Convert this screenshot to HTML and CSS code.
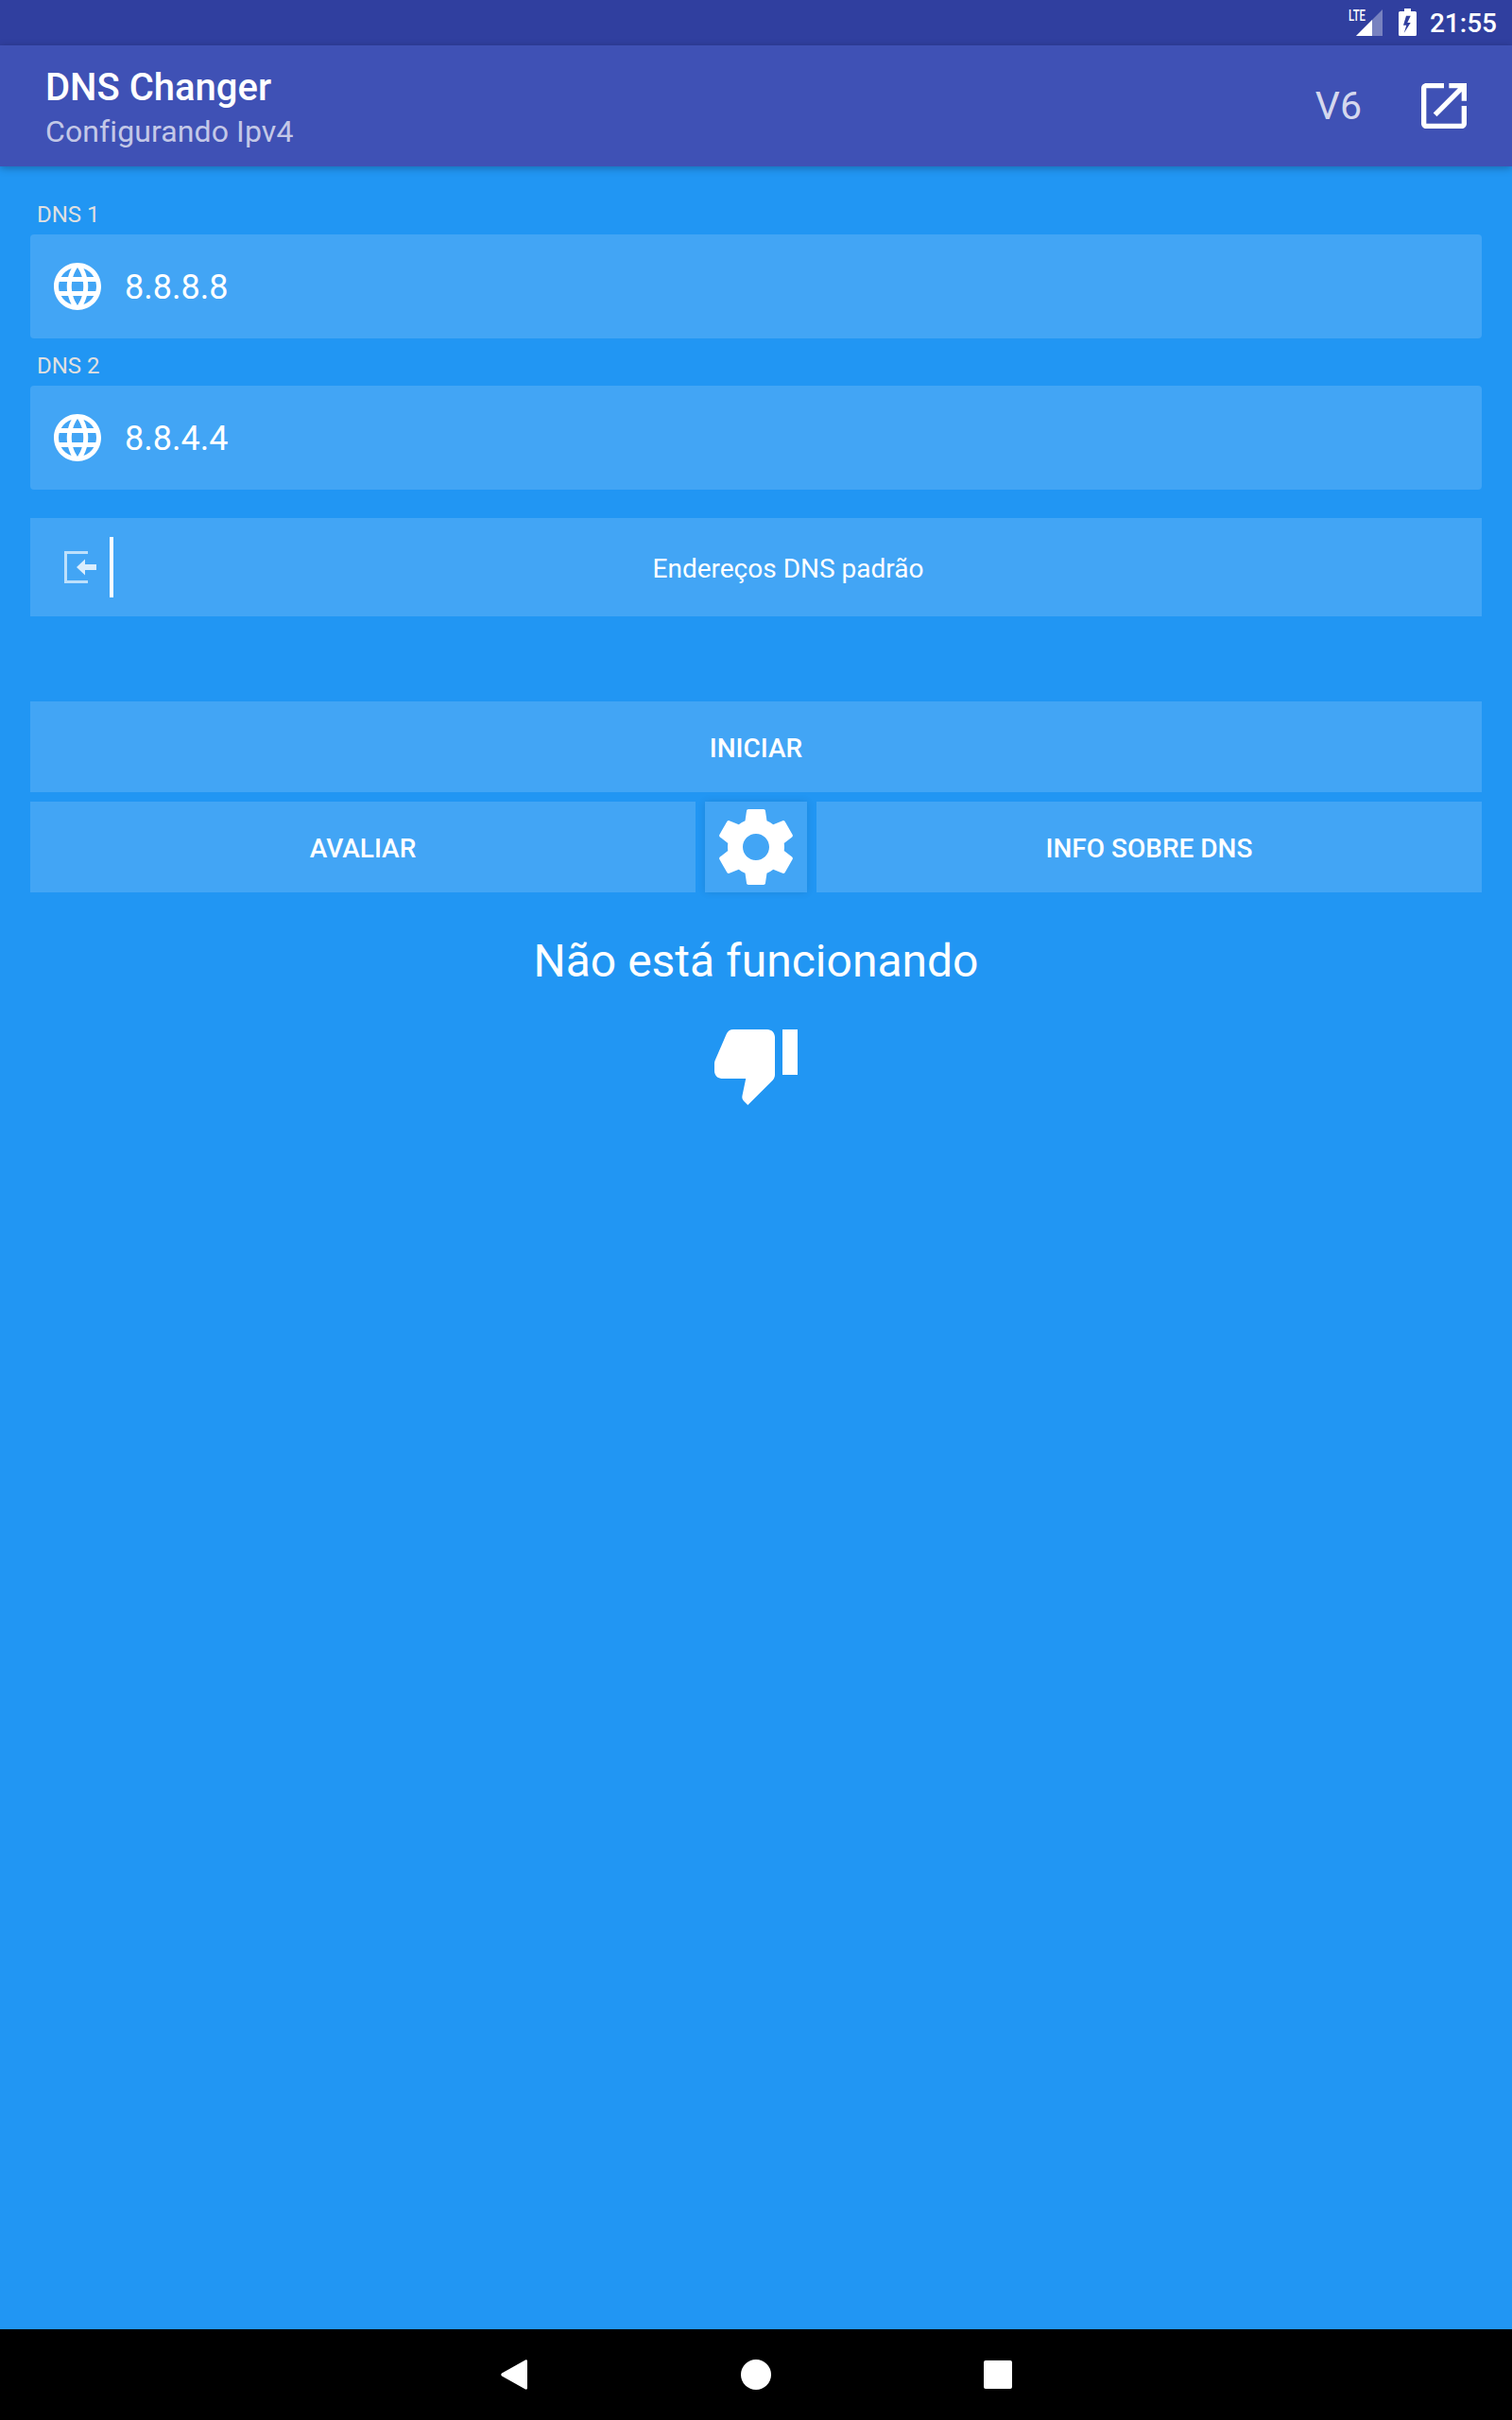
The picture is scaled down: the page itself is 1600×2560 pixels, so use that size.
FILE: index.html
```html
<!DOCTYPE html>
<html lang="pt">
<head>
<meta charset="utf-8">
<title>DNS Changer</title>
<link rel="stylesheet" href="styles.css">
</head>
<body>
<div class="screen">
  <div class="statusbar">
    <svg class="ic-signal" viewBox="0 -6 36 34" width="36" height="34">
      <path class="faint" d="M8 28 36 0v28z"/>
      <path d="M8 28 25 11v17z"/>
      <text class="lte" x="0" y="12" textLength="18" lengthAdjust="spacingAndGlyphs">LTE</text>
    </svg>
    <svg class="ic-battery" viewBox="0 0 19 29" width="19" height="29"><path fill-rule="evenodd" d="M6 0h7v3h4.500a1.500 1.500 0 0 1 1.500 1.500V27.500a1.500 1.500 0 0 1-1.500 1.500H1.500A1.500 1.500 0 0 1 0 27.500V4.500A1.500 1.500 0 0 1 1.500 3H6zM8 7.700 5 17.700h3.300L5.700 26l7-11H9.300l3.400-7.300z"/></svg>
    <span class="clock">21:55</span>
  </div>
  <header class="appbar">
    <div class="titles">
      <div class="title">DNS Changer</div>
      <div class="subtitle">Configurando Ipv4</div>
    </div>
    <span class="v6">V6</span>
    <svg class="ic-open" viewBox="0 0 24 24" width="64" height="64"><path d="M19 19H5V5h7V3H5c-1.11 0-2 .9-2 2v14c0 1.1.89 2 2 2h14c1.1 0 2-.9 2-2v-7h-2v7zM14 3v2h3.59l-9.83 9.83 1.41 1.41L19 6.41V10h2V3h-7z"/></svg>
  </header>
  <main class="content">
    <label class="field-label first">DNS 1</label>
    <div class="field">
      <svg class="ic-globe" viewBox="0 0 24 24" width="60" height="60"><path d="M11.99 2C6.47 2 2 6.48 2 12s4.47 10 9.99 10C17.52 22 22 17.52 22 12S17.52 2 11.99 2zm6.93 6h-2.95c-.32-1.25-.78-2.45-1.38-3.56 1.84.63 3.37 1.91 4.33 3.56zM12 4.04c.83 1.2 1.48 2.53 1.91 3.96h-3.82c.43-1.43 1.08-2.76 1.91-3.96zM4.26 14C4.1 13.36 4 12.69 4 12s.1-1.36.26-2h3.38c-.08.66-.14 1.32-.14 2 0 .68.06 1.34.14 2H4.26zm.82 2h2.95c.32 1.25.78 2.45 1.38 3.56-1.84-.63-3.37-1.9-4.33-3.56zm2.95-8H5.08c.96-1.66 2.49-2.93 4.33-3.56C8.81 5.55 8.35 6.75 8.03 8zM12 19.96c-.83-1.2-1.48-2.53-1.91-3.96h3.82c-.43 1.43-1.08 2.76-1.91 3.96zM14.34 14H9.66c-.09-.66-.16-1.32-.16-2 0-.68.07-1.35.16-2h4.68c.09.65.16 1.32.16 2 0 .68-.07 1.34-.16 2zm.25 5.56c.6-1.11 1.06-2.31 1.38-3.56h2.95c-.96 1.65-2.49 2.93-4.33 3.56zM16.36 14c.08-.66.14-1.32.14-2 0-.68-.06-1.34-.14-2h3.38c.16.64.26 1.31.26 2s-.1 1.36-.26 2h-3.38z"/></svg>
      <span class="field-value">8.8.8.8</span>
    </div>
    <label class="field-label">DNS 2</label>
    <div class="field">
      <svg class="ic-globe" viewBox="0 0 24 24" width="60" height="60"><path d="M11.99 2C6.47 2 2 6.48 2 12s4.47 10 9.99 10C17.52 22 22 17.52 22 12S17.52 2 11.99 2zm6.93 6h-2.95c-.32-1.25-.78-2.45-1.38-3.56 1.84.63 3.37 1.91 4.33 3.56zM12 4.04c.83 1.2 1.48 2.53 1.91 3.96h-3.82c.43-1.43 1.08-2.76 1.91-3.96zM4.26 14C4.1 13.36 4 12.69 4 12s.1-1.36.26-2h3.38c-.08.66-.14 1.32-.14 2 0 .68.06 1.34.14 2H4.26zm.82 2h2.95c.32 1.25.78 2.45 1.38 3.56-1.84-.63-3.37-1.9-4.33-3.56zm2.95-8H5.08c.96-1.66 2.49-2.93 4.33-3.56C8.81 5.55 8.35 6.75 8.03 8zM12 19.96c-.83-1.2-1.48-2.53-1.91-3.96h3.82c-.43 1.43-1.08 2.76-1.91 3.96zM14.34 14H9.66c-.09-.66-.16-1.32-.16-2 0-.68.07-1.35.16-2h4.68c.09.65.16 1.32.16 2 0 .68-.07 1.34-.16 2zm.25 5.56c.6-1.11 1.06-2.31 1.38-3.56h2.95c-.96 1.65-2.49 2.93-4.33 3.56zM16.36 14c.08-.66.14-1.32.14-2 0-.68-.06-1.34-.14-2h3.38c.16.64.26 1.31.26 2s-.1 1.36-.26 2h-3.38z"/></svg>
      <span class="field-value">8.8.4.4</span>
    </div>
    <div class="defaults">
      <svg class="ic-exit" viewBox="0 0 36 34" width="36" height="34">
        <path class="box" d="M25 1.500H1.500v31H25"/>
        <path class="arrow" d="M13 17l9-8.500V14h12v6H22v5.500z"/>
      </svg>
      <span class="divider"></span>
      <span class="defaults-text">Endereços DNS padrão</span>
    </div>
    <button class="btn start">INICIAR</button>
    <div class="btn-row">
      <button class="btn grow">AVALIAR</button>
      <button class="btn gear">
        <svg viewBox="0 0 24 24" width="96" height="96"><path d="M19.43 12.98c.04-.32.07-.64.07-.98s-.03-.66-.07-.98l2.11-1.65c.19-.15.24-.42.12-.64l-2-3.46c-.12-.22-.39-.3-.61-.22l-2.49 1c-.52-.4-1.08-.73-1.69-.98l-.38-2.65C14.46 2.18 14.25 2 14 2h-4c-.25 0-.46.18-.49.42l-.38 2.65c-.61.25-1.17.59-1.69.98l-2.49-1c-.23-.09-.49 0-.61.22l-2 3.46c-.13.22-.07.49.12.64l2.11 1.65c-.04.32-.07.65-.07.98s.03.66.07.98l-2.11 1.65c-.19.15-.24.42-.12.64l2 3.46c.12.22.39.3.61.22l2.49-1c.52.4 1.08.73 1.69.98l.38 2.65c.03.24.24.42.49.42h4c.25 0 .46-.18.49-.42l.38-2.65c.61-.25 1.17-.59 1.69-.98l2.49 1c.23.09.49 0 .61-.22l2-3.46c.12-.22.07-.49-.12-.64l-2.11-1.65zM12 15.5c-1.93 0-3.5-1.57-3.5-3.5s1.57-3.5 3.5-3.5 3.5 1.57 3.5 3.5-1.57 3.5-3.5 3.5z"/></svg>
      </button>
      <button class="btn grow">INFO SOBRE DNS</button>
    </div>
    <div class="state">Não está funcionando</div>
    <svg class="ic-thumb" viewBox="0 0 24 24" width="96" height="96"><path d="M15 3H6c-.83 0-1.54.5-1.84 1.220l-3.020 7.050c-.09.23-.14.47-.14.73v2c0 1.100.9 2 2 2h6.310l-.95 4.570-.03.32c0 .41.17.79.44 1.060L9.830 23l6.590-6.590c.36-.36.58-.86.58-1.410V5c0-1.100-.9-2-2-2zm4 0v12h4V3h-4z"/></svg>
  </main>
  <nav class="navbar">
    <svg class="nav-icon" viewBox="0 0 28 32" width="28" height="32"><path d="M26 .5c1 -.5 2 .2 2 1.200v28.600c0 1-1 1.700-2 1.200L1 17.500c-1-.7-1-2.300 0-3z"/></svg>
    <span class="nav-home"></span>
    <span class="nav-square"></span>
  </nav>
</div>
</body>
</html>
```
FILE: styles.css
```css
* { box-sizing: border-box; }
html, body { margin: 0; padding: 0; }
body { font-family: Roboto, "Liberation Sans", sans-serif; color: #fff; background: #2196f3; }
svg { display: block; fill: #fff; flex: none; }

.screen { width: 1600px; height: 2560px; display: flex; flex-direction: column; overflow: hidden; }

.statusbar { height: 48px; flex: none; background: #303f9f; display: flex; align-items: center; justify-content: flex-end; padding-right: 16px; }
.ic-signal { margin-top: -7px; }
.ic-signal .faint { opacity: .35; }
.lte { font: 500 16px Roboto, sans-serif; fill: #fff; }
.ic-battery { margin-left: 17px; margin-top: -1px; }
.clock { margin-left: 14px; font-size: 28px; font-weight: 500; line-height: 48px; padding-top: 2px; }

.appbar { height: 128px; flex: none; background: #3f51b5; display: flex; align-items: center; padding: 0 40px 0 48px; position: relative; box-shadow: 0 2px 8px rgba(0,0,0,.28); }
.titles { flex: 1; padding-top: 5px; }
.title { font-size: 40px; font-weight: 500; line-height: 46px; }
.subtitle { font-size: 32px; line-height: 40px; letter-spacing: .1px; color: rgba(255,255,255,.7); margin-top: 3px; }
.v6 { font-size: 41px; color: rgba(255,255,255,.8); margin-right: 55px; }

.content { flex: 1; display: flex; flex-direction: column; padding: 0 32px; }
.field-label { display: block; font-size: 24px; line-height: 28px; padding: 1px 0 0 7px; margin: 14px 0 7px; color: #e0e0e0; }
.field-label.first { margin-top: 36px; }
.field { height: 110px; flex: none; background: #42a5f5; border-radius: 4px; display: flex; align-items: center; padding-left: 20px; }
.field-value { margin-left: 20px; font-size: 36px; padding-top: 2px; }

.defaults { height: 104px; flex: none; margin-top: 30px; background: #42a5f5; display: flex; align-items: center; padding-left: 36px; }
.ic-exit .box { fill: none; stroke: #fff; stroke-width: 3px; opacity: .65; }
.ic-exit .arrow { opacity: .8; }
.divider { width: 4px; height: 64px; background: #fff; margin-left: 12px; }
.defaults-text { flex: 1; text-align: center; font-size: 28px; padding: 2px 20px 0 0; }

.btn { display: flex; align-items: center; justify-content: center; height: 96px; border: 0; padding: 2px 0 0; background: #42a5f5; color: #fff; font: 500 28px Roboto, sans-serif; }
.start { margin-top: 90px; width: 100%; flex: none; }
.btn-row { display: flex; gap: 10px; margin-top: 10px; flex: none; }
.grow { flex: 1; }
.gear { width: 108px; flex: none; padding: 0; box-shadow: 0 0 8px rgba(0,0,0,.1); }

.state { margin-top: 40px; padding-top: 2px; text-align: center; font-size: 48px; line-height: 62px; }
.ic-thumb { align-self: center; margin-top: 29px; }

.navbar { height: 96px; flex: none; background: #000; display: flex; align-items: center; padding-left: 530px; }
.nav-home { width: 32px; height: 32px; border-radius: 50%; background: #fff; margin-left: 226px; }
.nav-square { width: 30px; height: 30px; border-radius: 2px; background: #fff; margin-left: 225px; }
```
